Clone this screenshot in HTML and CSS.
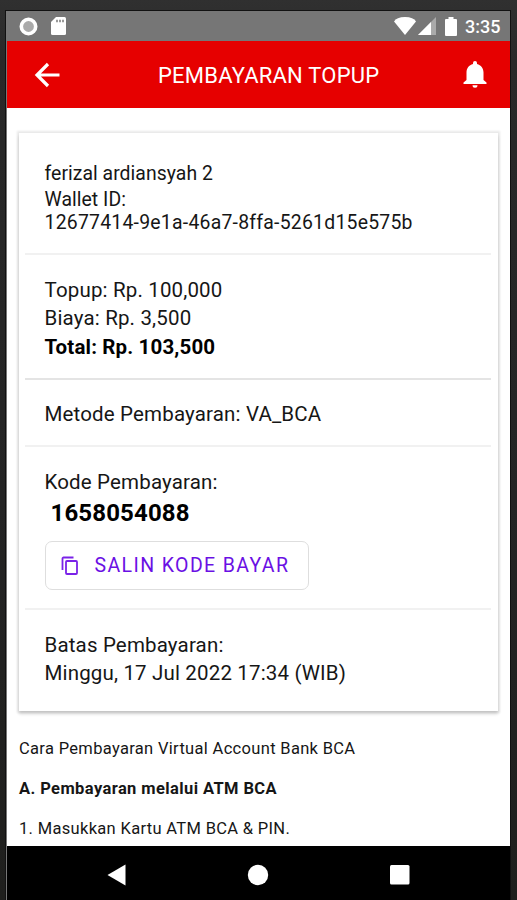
FILE: index.html
```
<!DOCTYPE html>
<html lang="id">
<head>
<meta charset="utf-8">
<title>Pembayaran Topup</title>
<link rel="stylesheet" href="styles.css">
</head>
<body>
<div class="device">
  <div class="screen">
    <div class="status">
      <svg class="status-icon" width="19" height="19" viewBox="0 0 19 19"><circle cx="9.500" cy="9.500" r="7.200" fill="#aaa" stroke="#fff" stroke-width="3.600"/></svg>
      <svg class="status-icon card-icon" width="15" height="18" viewBox="0 0 15 18"><path fill="#fff" d="M5 0h8.500a1.500 1.500 0 0 1 1.500 1.500v15a1.500 1.500 0 0 1-1.500 1.500h-12A1.500 1.500 0 0 1 0 16.500V5z"/><path stroke="#999" stroke-width="2.500" d="M5 4h8" stroke-dasharray="2 1"/></svg>
      <svg class="wifi" width="22" height="18" viewBox="0 0 22 18"><path fill="#fff" d="M0 4.500Q2.500 0 11 0t11 4.500L11 18z"/></svg>
      <svg class="signal" width="18" height="18" viewBox="0 0 18 18"><path fill="#aaa" d="M0 18 18 0v18z"/><path fill="#fff" d="M0 18 13 5v13z"/></svg>
      <svg class="battery" width="12" height="19" viewBox="0 0 12 19"><path fill="#fff" d="M3.500 0h5v2H11a1 1 0 0 1 1 1v15a1 1 0 0 1-1 1H1a1 1 0 0 1-1-1V3a1 1 0 0 1 1-1h2.500z"/></svg>
      <span class="clock">3:35</span>
    </div>
    <header class="appbar">
      <svg class="back" width="26" height="26" viewBox="0 0 26 26"><path fill="none" stroke="#fff" stroke-width="3.200" d="M25.500 13H3M14 2 3 13l11 11"/></svg>
      <h1 class="title">PEMBAYARAN TOPUP</h1>
      <svg class="bell" width="24" height="27" viewBox="0 0 24 27"><path fill="#fff" d="M12 0a2 2 0 0 1 2 2v1c4 1 6.500 4.300 6.500 8.500V19l3 2.500V23H.5v-1.500l3-2.500v-7.500C3.500 7.300 6 4 10 3V2a2 2 0 0 1 2-2zM9.500 24.200h5a2.500 2.500 0 0 1-5 0z"/></svg>
    </header>
    <main class="content">
      <section class="card">
        <div class="block user">
          <p class="name">ferizal ardiansyah 2</p>
          <p class="wallet">Wallet ID:</p>
          <p class="wallet-id">12677414-9e1a-46a7-8ffa-5261d15e575b</p>
        </div>
        <div class="block amount">
          <p class="topup">Topup: Rp. 100,000</p>
          <p class="fee">Biaya: Rp. 3,500</p>
          <p class="total">Total: Rp. 103,500</p>
        </div>
        <div class="block method"><p>Metode Pembayaran: VA_BCA</p></div>
        <div class="block code">
          <p>Kode Pembayaran:</p>
          <p class="code-value">1658054088</p>
          <button class="copy">
            <svg width="18" height="20" viewBox="0 0 18 20"><path fill="none" stroke="#7a22e8" stroke-width="1.800" d="M12.500 1.500h-10a1 1 0 0 0-1 1V14"/><rect x="5" y="5" width="11" height="13" rx="1" fill="none" stroke="#7a22e8" stroke-width="1.800"/></svg>
            <span>SALIN KODE BAYAR</span>
          </button>
        </div>
        <div class="block due">
          <p>Batas Pembayaran:</p>
          <p class="date">Minggu, 17 Jul 2022 17:34 (WIB)</p>
        </div>
      </section>
      <div class="guide">
        <p>Cara Pembayaran Virtual Account Bank BCA</p>
        <p class="method-title">A. Pembayaran melalui ATM BCA</p>
        <p class="step">1. Masukkan Kartu ATM BCA &amp; PIN.</p>
      </div>
    </main>
    <nav class="navbar">
      <svg width="20" height="22" viewBox="0 0 20 22"><path fill="#fff" d="M18.500.5v21L.5 11z"/></svg>
      <svg width="22" height="22" viewBox="0 0 22 22"><circle cx="11" cy="11" r="10.200" fill="#fff"/></svg>
      <svg class="recent" width="20" height="20" viewBox="0 0 20 20"><rect width="19.500" height="19.500" rx="1.500" fill="#fff"/></svg>
    </nav>
  </div>
</div>
</body>
</html>
```
FILE: styles.css
```
* { box-sizing: border-box; }
body, p, h1 { margin: 0; }
body { width: 517px; height: 900px; overflow: hidden; font-family: Roboto, "Liberation Sans", sans-serif; color: #161616; }
svg { display: block; flex: none; }
.device { height: 900px; padding: 11px 7px 0 6px; background: linear-gradient(#303030 0, #292929 60px, #242424 500px, #1f1f1d); }
.screen { height: 889px; display: flex; flex-direction: column; background: #fff; border-left: 1px solid #777; box-shadow: 0 0 0 1px #111; }
.status { height: 30px; flex: none; display: flex; align-items: center; padding: 0 10px 0 12px; background: #767676; }
.card-icon { margin-left: 13px; }
.wifi { margin-left: auto; }
.signal { margin-left: 2px; }
.battery { margin-left: 9px; }
.clock { width: 35px; margin-left: 8px; padding-top: 2px; font-size: 18px; font-weight: 500; line-height: 28px; color: #fff; white-space: nowrap; }
.appbar { height: 67px; flex: none; display: flex; align-items: center; padding: 0 23px 0 27px; background: #e60000; color: #fff; }
.title { margin-left: 98px; font-size: 22px; font-weight: 400; line-height: 30px; letter-spacing: .22px; padding-top: 2px; white-space: nowrap; }
.bell { margin-left: auto; }
.content { flex: 1; min-height: 0; overflow: hidden; padding: 25px 12px 0; }
.card { height: 578px; padding: 0 7px 0 6px; background: #fff; box-shadow: 0 0 2px 2px rgba(0,0,0,.09), 0 3px 3px rgba(0,0,0,.16); }
.block { padding-left: 19.5px; border-bottom: 2px solid #f1f1f1; font-size: 20.5px; line-height: 28px; letter-spacing: .16px; white-space: nowrap; }
.user { height: 122px; padding-top: 28px; font-size: 19.4px; }
.name { line-height: 26px; letter-spacing: .04px; }
.wallet { line-height: 25px; letter-spacing: .04px; }
.wallet-id { line-height: 22px; letter-spacing: .24px; }
.amount { height: 125px; padding-top: 21px; border-bottom-color: #e4e4e4; }
.amount p { line-height: 28.3px; }
.amount .total { font-weight: 700; letter-spacing: .15px; color: #000; }
.method { height: 67px; padding-top: 20px; }
.code { height: 163px; padding-top: 21px; }
.code-value { padding-left: 6px; font-size: 24px; font-weight: 700; line-height: 34px; letter-spacing: .15px; color: #000; }
.copy { display: flex; align-items: center; gap: 16px; width: 264px; height: 49px; margin: 11px 0 0; padding: 0 0 0 15px; border: 1px solid #dedede; border-radius: 7px; background: #fff; color: #6a10e4; font: 19.5px Roboto, sans-serif; letter-spacing: 1.4px; white-space: nowrap; }
.due { padding-top: 21px; border-bottom: 0; }
.guide { padding-top: 27px; font-size: 16.5px; line-height: 22px; letter-spacing: .32px; white-space: nowrap; }
.guide p { margin-bottom: 18px; }
.guide .method-title { font-weight: 700; letter-spacing: .4px; }
.navbar { height: 54px; flex: none; display: flex; align-items: center; gap: 120px; padding: 3px 0 0 100px; background: #000; }
.recent { margin-left: 1px; }
```
